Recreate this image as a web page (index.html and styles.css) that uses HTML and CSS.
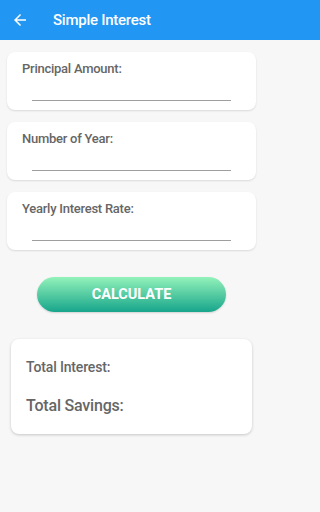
FILE: index.html
```
<!DOCTYPE html>
<html>
<head>
<meta charset="utf-8">
<link rel="stylesheet" href="styles.css">
</head>
<body>
<header class="appbar">
  <svg class="back" width="18" height="18" viewBox="0 0 24 24"><path d="M20 11H7.83l5.59-5.59L12 4l-8 8 8 8 1.41-1.41L7.83 13H20v-2z" fill="#fff"/></svg>
  <span class="title">Simple Interest</span>
</header>
<main class="content">
  <div class="card field">
    <div class="label">Principal Amount:</div>
    <div class="line"></div>
  </div>
  <div class="card field">
    <div class="label">Number of Year:</div>
    <div class="line"></div>
  </div>
  <div class="card field">
    <div class="label">Yearly Interest Rate:</div>
    <div class="line"></div>
  </div>
  <div class="btnrow"><button class="calc">CALCULATE</button></div>
  <div class="card result">
    <div class="r1">Total Interest:</div>
    <div class="r2">Total Savings:</div>
  </div>
</main>
</body>
</html>
```
FILE: styles.css
```
* { box-sizing: border-box; }
html { background: #f7f7f7; }
html, body { margin: 0; padding: 0; }
body {
  background: #f7f7f7;
  font-family: Roboto, "Liberation Sans", sans-serif;
  height: 512px;
  overflow: hidden;
}
.appbar {
  height: 40px;
  background: #2196f3;
  display: flex;
  align-items: center;
  padding-left: 11px;
}
.back { display: block; }
.title {
  color: #fff;
  font-weight: 500;
  font-size: 15px;
  letter-spacing: -0.25px;
  margin-left: 24px;
}
.content {
  width: 263px;
  padding: 12px 7px 0 7px;
  display: flex;
  flex-direction: column;
}
.card {
  background: #fff;
  border-radius: 8px;
  box-shadow: 0 1px 2px rgba(0,0,0,0.12);
}
.field {
  height: 58px;
  margin-bottom: 12px;
  padding: 9px 25px 0 15px;
  display: flex;
  flex-direction: column;
}
.label {
  font-size: 13px;
  font-weight: 500;
  color: #666;
  line-height: 16px;
  letter-spacing: -0.25px;
}
.line {
  margin-top: 23px;
  margin-left: 10px;
  height: 1px;
  background: #9e9e9e;
}
.btnrow {
  display: flex;
  padding-left: 30px;
  margin-top: 15px;
}
.calc {
  width: 189px;
  height: 35px;
  border: none;
  border-radius: 18px;
  background: linear-gradient(#93f2b9, #17a58b);
  color: #fff;
  font-family: Roboto, "Liberation Sans", sans-serif;
  font-weight: 700;
  font-size: 14.5px;
  padding: 0;
  box-shadow: 0 1px 2px rgba(0,0,0,0.15);
}
.result {
  margin: 27px 4px 0 4px;
  height: 95px;
  padding: 20px 15px 0 15px;
  box-shadow: 0 1px 3px rgba(0,0,0,0.2);
}
.r1 {
  font-size: 14px;
  font-weight: 500;
  color: #666;
  line-height: 17px;
  letter-spacing: -0.15px;
}
.r2 {
  margin-top: 20px;
  font-size: 16px;
  font-weight: 500;
  color: #666;
  line-height: 19px;
  letter-spacing: -0.2px;
}
```
